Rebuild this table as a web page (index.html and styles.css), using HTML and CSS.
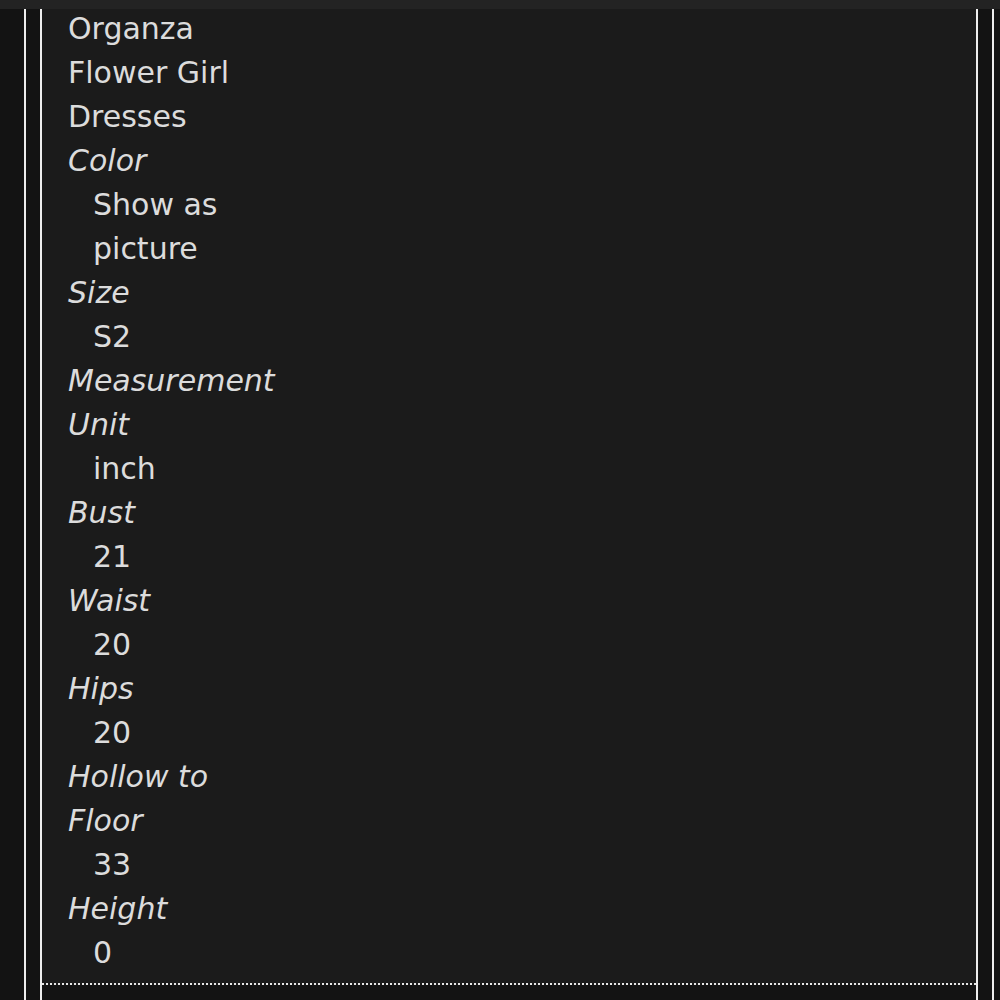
FILE: index.html
```html
<!DOCTYPE html>
<html>
<head>
<meta charset="utf-8">
<link rel="stylesheet" href="styles.css">
</head>
<body>
<div class="topbar"></div>
<div class="frame">
  <div class="column">
    <div class="item">
      <dl class="specs">
        <div class="title">Organza Flower Girl Dresses</div>
        <dt>Color</dt>
        <dd>Show as picture</dd>
        <dt>Size</dt>
        <dd>S2</dd>
        <dt>Measurement Unit</dt>
        <dd>inch</dd>
        <dt>Bust</dt>
        <dd>21</dd>
        <dt>Waist</dt>
        <dd>20</dd>
        <dt>Hips</dt>
        <dd>20</dd>
        <dt>Hollow to Floor</dt>
        <dd>33</dd>
        <dt>Height</dt>
        <dd>0</dd>
      </dl>
    </div>
  </div>
</div>
</body>
</html>
```
FILE: styles.css
```css
html, body {
  margin: 0;
  padding: 0;
  background: #131313;
  height: 100%;
  overflow: hidden;
}
.topbar {
  position: fixed;
  top: 0;
  left: 0;
  right: 0;
  height: 9px;
  background: #232323;
  z-index: 2;
}
.frame {
  margin-left: 24px;
  width: 938px;
  height: 100%;
  border-left: 2px solid #eeeeee;
  border-right: 2px solid #eeeeee;
  padding: 0 14px;
}
.column {
  height: 100%;
  width: 934px;
  border-left: 2px solid #eeeeee;
  border-right: 2px solid #eeeeee;
}
.item {
  background: #1b1b1b;
  border-bottom: 2px dotted #e6e6e6;
  padding: 7px 0 8px 26px;
}
.specs {
  margin: 0;
  width: 215px;
  font-family: "DejaVu Sans", Verdana, sans-serif;
  font-size: 30px;
  line-height: 44px;
  color: #dcdcdc;
}
.specs dt {
  font-style: italic;
}
.specs dd {
  margin-left: 25px;
}
```
